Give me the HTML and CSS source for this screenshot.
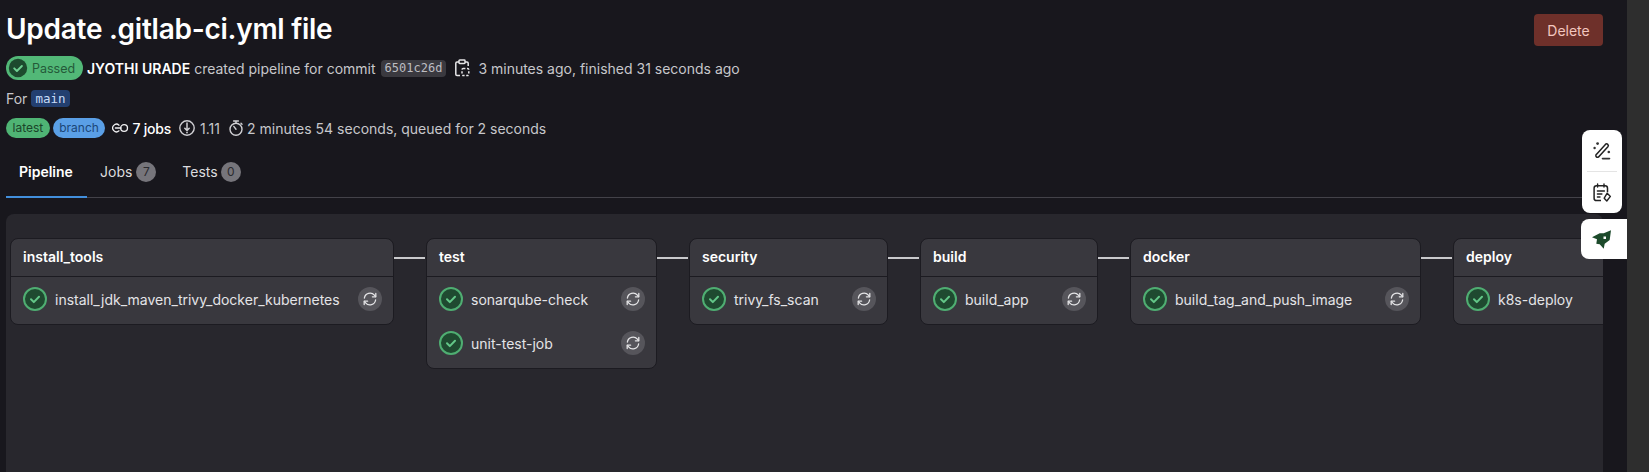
FILE: index.html
```html
<!DOCTYPE html>
<html lang="en">
<head>
    <meta charset="UTF-8">
    <meta name="viewport" content="width=device-width, initial-scale=1.0">
    <title>Update .gitlab-ci.yml file</title>
    <link rel="stylesheet" href="styles.css">
</head>
<body>
    <svg class="defs">
        <symbol id="icon-ok" viewBox="0 0 24 24">
            <circle cx="12" cy="12" r="11" fill="#1f4a30" stroke="#4fae72" stroke-width="2"/>
            <path d="M8 12.3l2.8 2.8L16 9.8" fill="none" stroke="#63c788" stroke-width="2" stroke-linecap="round" stroke-linejoin="round"/>
        </symbol>
        <symbol id="icon-retry" viewBox="0 0 16 16">
            <path d="M2.4 7A5.7 5.7 0 0 1 12.4 4.2L13.6 5.6M13.6 9A5.7 5.7 0 0 1 3.6 11.8L2.4 10.4" fill="none" stroke="#e4e4e6" stroke-width="1.3" stroke-linecap="round"/>
            <path d="M13.8 2.4v3.4h-3.4M2.2 13.6v-3.4h3.4" fill="none" stroke="#e4e4e6" stroke-width="1.3" stroke-linecap="round" stroke-linejoin="round"/>
        </symbol>
    </svg>

    <div class="page">
        <main class="content">
            <header class="head">
                <div class="head-text">
                    <h1>Update .gitlab-ci.yml file</h1>
                    <div class="meta meta-first">
                        <span class="status">
                            <svg class="status-icon" viewBox="0 0 20 20">
                                <circle cx="10" cy="10" r="9.2" fill="#1d4a2e"/>
                                <path d="M6.2 10.3l2.7 2.7 5-5" fill="none" stroke="#6fd092" stroke-width="1.9" stroke-linecap="round" stroke-linejoin="round"/>
                            </svg>
                            Passed
                        </span>
                        <span class="author">JYOTHI URADE</span>
                        <span>created pipeline for commit</span>
                        <code class="sha">6501c26d</code>
                        <svg class="icon-copy" viewBox="0 0 16 18">
                            <path d="M5 3H3A1.2 1.2 0 0 0 1.8 4.2v11A1.2 1.2 0 0 0 3 16.4h3M11 3h2a1.2 1.2 0 0 1 1.2 1.2V7" fill="none" stroke="#e6e6e8" stroke-width="1.5"/>
                            <rect x="5" y="1" width="6" height="3.4" rx=".7" fill="none" stroke="#e6e6e8" stroke-width="1.5"/>
                            <rect x="8" y="9.6" width="6.8" height="6.8" rx="1.2" fill="none" stroke="#e6e6e8" stroke-width="1.5" stroke-dasharray="2.2 1.6"/>
                        </svg>
                        <span class="time">3 minutes ago, finished 31 seconds ago</span>
                    </div>
                    <div class="meta meta-ref">
                        <span>For</span>
                        <code class="ref">main</code>
                    </div>
                    <div class="meta meta-stats">
                        <span class="pill pill-green">latest</span>
                        <span class="pill pill-blue">branch</span>
                        <span class="stat stat-jobs">
                            <svg class="icon-jobs" viewBox="0 0 18 12">
                                <path d="M7.4 3A4 4 0 1 0 7.4 9" fill="none" stroke="#f0f0f2" stroke-width="1.4" stroke-linecap="round"/>
                                <path d="M3.6 6h6" stroke="#f0f0f2" stroke-width="1.4" stroke-linecap="round"/>
                                <circle cx="12.8" cy="6" r="3.6" fill="none" stroke="#f0f0f2" stroke-width="1.4"/>
                            </svg>
                            7 jobs
                        </span>
                        <span class="stat stat-rate">
                            <svg class="icon-stat" viewBox="0 0 16 16">
                                <circle cx="8" cy="8" r="7.2" fill="none" stroke="#cfcfd3" stroke-width="1.4"/>
                                <path d="M8 3v7M5.8 8.2L8 10.6l2.2-2.4" fill="none" stroke="#cfcfd3" stroke-width="1.5" stroke-linecap="round" stroke-linejoin="round"/>
                                <circle cx="8" cy="12.6" r=".9" fill="#cfcfd3"/>
                            </svg>
                            1.11
                        </span>
                        <span class="stat stat-time">
                            <svg class="icon-stat" viewBox="0 0 16 16">
                                <circle cx="8" cy="9.2" r="6" fill="none" stroke="#cfcfd3" stroke-width="1.4"/>
                                <path d="M5.6 1h4.8M8 1v2M8 9.2L5.8 6.4M13 3.2l1 1" fill="none" stroke="#cfcfd3" stroke-width="1.4" stroke-linecap="round"/>
                            </svg>
                            2 minutes 54 seconds, queued for 2 seconds
                        </span>
                    </div>
                </div>
                <button class="delete">Delete</button>
            </header>

            <nav class="tabs">
                <a class="tab tab-active">Pipeline</a>
                <a class="tab">Jobs <span class="count">7</span></a>
                <a class="tab">Tests <span class="count">0</span></a>
            </nav>

            <section class="graph">
                <div class="stages">
                    <div class="stage">
                        <div class="stage-title">install_tools</div>
                        <div class="job">
                            <svg class="job-status"><use href="#icon-ok"/></svg>
                            <span class="job-name">install_jdk_maven_trivy_docker_kubernetes</span>
                            <span class="retry"><svg class="retry-icon"><use href="#icon-retry"/></svg></span>
                        </div>
                    </div>
                    <div class="link"></div>
                    <div class="stage">
                        <div class="stage-title">test</div>
                        <div class="job">
                            <svg class="job-status"><use href="#icon-ok"/></svg>
                            <span class="job-name">sonarqube-check</span>
                            <span class="retry"><svg class="retry-icon"><use href="#icon-retry"/></svg></span>
                        </div>
                        <div class="job">
                            <svg class="job-status"><use href="#icon-ok"/></svg>
                            <span class="job-name">unit-test-job</span>
                            <span class="retry"><svg class="retry-icon"><use href="#icon-retry"/></svg></span>
                        </div>
                    </div>
                    <div class="link"></div>
                    <div class="stage">
                        <div class="stage-title">security</div>
                        <div class="job">
                            <svg class="job-status"><use href="#icon-ok"/></svg>
                            <span class="job-name">trivy_fs_scan</span>
                            <span class="retry"><svg class="retry-icon"><use href="#icon-retry"/></svg></span>
                        </div>
                    </div>
                    <div class="link"></div>
                    <div class="stage">
                        <div class="stage-title">build</div>
                        <div class="job">
                            <svg class="job-status"><use href="#icon-ok"/></svg>
                            <span class="job-name">build_app</span>
                            <span class="retry"><svg class="retry-icon"><use href="#icon-retry"/></svg></span>
                        </div>
                    </div>
                    <div class="link"></div>
                    <div class="stage">
                        <div class="stage-title">docker</div>
                        <div class="job">
                            <svg class="job-status"><use href="#icon-ok"/></svg>
                            <span class="job-name">build_tag_and_push_image</span>
                            <span class="retry"><svg class="retry-icon"><use href="#icon-retry"/></svg></span>
                        </div>
                    </div>
                    <div class="link"></div>
                    <div class="stage">
                        <div class="stage-title">deploy</div>
                        <div class="job">
                            <svg class="job-status"><use href="#icon-ok"/></svg>
                            <span class="job-name">k8s-deploy</span>
                            <span class="retry"><svg class="retry-icon"><use href="#icon-retry"/></svg></span>
                        </div>
                    </div>
                </div>
            </section>
        </main>
        <div class="scrollbar"></div>
    </div>

    <div class="float-tools">
        <svg class="tool-icon" viewBox="0 0 20 20">
            <path d="M4.6 13.2L13.4 3.4a1.7 1.7 0 0 1 2.5 2.3L7 15.5a1.7 1.7 0 1 1-2.4-2.3Z" fill="none" stroke="#222" stroke-width="1.5"/>
            <circle cx="5.6" cy="2.6" r="1.4" fill="#333"/>
            <circle cx="2.6" cy="7" r="1.2" fill="#333"/>
            <circle cx="16.8" cy="11" r="1.3" fill="#333"/>
            <path d="M10.5 17.6h7" stroke="#333" stroke-width="1.6" stroke-linecap="round"/>
        </svg>
        <div class="tool-sep"></div>
        <svg class="tool-icon" viewBox="0 0 20 20">
            <path d="M9 17.6H4.5a2.4 2.4 0 0 1-2.4-2.4V5.2a2.4 2.4 0 0 1 2.4-2.4h8.6a2.4 2.4 0 0 1 2.4 2.4v4" fill="none" stroke="#222" stroke-width="1.5"/>
            <path d="M5.6 1v3M12 1v3M5.4 8h7M5.4 11h4.5M5.4 14h2.6" fill="none" stroke="#222" stroke-width="1.4" stroke-linecap="round"/>
            <path d="M15.2 10.2l3.2 3.2-3.6 4.6-2.6-2.8Z" fill="none" stroke="#222" stroke-width="1.4" stroke-linejoin="round"/>
        </svg>
    </div>
    <div class="float-rocket">
        <svg class="rocket-icon" viewBox="0 0 19 19">
            <path d="M19 .3L17.7 10 12.7 13.7 11.7 18.7 7.7 14.3 4.3 13.7 5 9.3 0 7.3 7.7 3.3 11.7 3.3Z" fill="#1c4a2b"/>
            <rect x="11.5" y="6.5" width="2.5" height="2.5" fill="#fff"/>
        </svg>
    </div>
</body>
</html>
```

FILE: styles.css
```css
* {
    box-sizing: border-box;
}

html, body {
    height: 100%;
}

body {
    margin: 0;
    overflow: hidden;
    background: #18171d;
    color: #c7c7cb;
    font-family: Inter, "Liberation Sans", sans-serif;
    font-size: 14px;
}

.defs {
    display: none;
}

.page {
    display: flex;
    height: 472px;
}

.content {
    width: 1627px;
    padding-left: 6px;
    padding-right: 24px;
    overflow: hidden;
}

.scrollbar {
    width: 22px;
    background: #2e2e2e;
}

/* header */
.head {
    display: flex;
    justify-content: space-between;
    align-items: flex-start;
    height: 150px;
}

h1 {
    margin: 12px 0 0;
    height: 34px;
    color: #fff;
    font-size: 28px;
    line-height: 34px;
    font-weight: 600;
    letter-spacing: -0.27px;
}

.meta {
    display: flex;
    align-items: center;
}

.meta-first {
    margin-top: 10px;
    height: 24px;
}

.meta-ref {
    margin-top: 7px;
    height: 22px;
}

.meta-stats {
    margin-top: 9px;
    height: 20px;
}

.status {
    display: inline-flex;
    align-items: center;
    width: 77px;
    height: 24px;
    padding-left: 2px;
    border-radius: 12px;
    background: #52b877;
    color: #245a39;
    font-size: 12.5px;
    gap: 4px;
}

.status-icon {
    width: 20px;
    height: 20px;
}

.author {
    margin-left: 4px;
    margin-right: 4px;
    color: #fff;
    font-weight: 600;
}

.sha {
    margin-left: 5px;
    padding: 0 4px;
    height: 17px;
    border-radius: 4px;
    background: #3a393f;
    color: #bdbdc2;
    font-family: "DejaVu Sans Mono", monospace;
    font-size: 12px;
    line-height: 17px;
}

.icon-copy {
    width: 16px;
    height: 18px;
    margin-left: 8px;
}

.time {
    margin-left: 8px;
}

.ref {
    margin-left: 4px;
    padding: 0 4px;
    height: 17px;
    border-radius: 4px;
    background: #233f70;
    color: #c8dcf7;
    font-family: "DejaVu Sans Mono", monospace;
    font-size: 12.5px;
    line-height: 17px;
}

.pill {
    height: 20px;
    padding: 0 6.5px;
    border-radius: 10px;
    font-size: 12px;
    line-height: 20px;
}

.pill-green {
    background: #4fb474;
    color: #1b4429;
}

.pill-blue {
    margin-left: 3px;
    background: #5a9fe6;
    color: #1b4677;
}

.stat {
    display: inline-flex;
    align-items: center;
    margin-left: 9px;
    gap: 4px;
}

.stat-jobs {
    margin-left: 7px;
    gap: 3px;
    color: #fff;
    font-weight: 500;
    letter-spacing: -0.2px;
}

.stat-rate {
    margin-left: 8px;
    gap: 5px;
}

.stat-time {
    margin-left: 8px;
    gap: 3px;
}

.icon-jobs {
    width: 17px;
    height: 12px;
}

.icon-stat {
    width: 16px;
    height: 16px;
}

.delete {
    margin-top: 14px;
    width: 69px;
    height: 32px;
    border: 0;
    border-radius: 4px;
    background: #6e302a;
    color: #f3c6bf;
    font-family: inherit;
    font-size: 14px;
}

/* tabs */
.tabs {
    display: flex;
    height: 48px;
    border-bottom: 1px solid #434249;
}

.tab {
    display: flex;
    align-items: center;
    height: 48px;
    padding: 0 12px 3px 13px;
    gap: 4px;
    color: #dcdcdf;
    border-bottom: 2px solid transparent;
}

.tab-active {
    width: 81px;
    color: #fff;
    font-weight: 600;
    border-bottom-color: #428fdc;
}

.tab:nth-child(3) {
    padding-left: 14px;
    gap: 3px;
}

.count {
    width: 20px;
    height: 20px;
    border-radius: 50%;
    background: #76757b;
    color: #2a2a2e;
    font-size: 12px;
    line-height: 20px;
    text-align: center;
}

/* pipeline graph */
.graph {
    margin-top: 16px;
    height: 260px;
    padding: 24px 0 0 4px;
    border-radius: 8px 8px 0 0;
    background: #28272d;
    overflow: hidden;
}

.stages {
    display: grid;
    grid-template-columns: 384px 32px 231px 32px 199px 32px 178px 32px 291px 32px 231px;
    align-items: start;
}

.stage {
    border: 1px solid #1c1b21;
    border-radius: 8px;
    background: #39383e;
    padding-bottom: 3px;
}

.stage-title {
    height: 38px;
    padding: 0 12px;
    border-bottom: 1px solid #1c1b21;
    color: #fff;
    font-weight: 600;
    line-height: 36px;
}

.job {
    display: flex;
    align-items: center;
    height: 44px;
    padding: 0 11px 0 12px;
}

.job-status {
    width: 24px;
    height: 24px;
    flex: none;
}

.job-name {
    flex: 1;
    margin-left: 8px;
    color: #e4e4e7;
    white-space: nowrap;
}

.retry {
    display: flex;
    align-items: center;
    justify-content: center;
    width: 24px;
    height: 24px;
    border-radius: 50%;
    background: #56555b;
    flex: none;
}

.retry-icon {
    width: 16px;
    height: 16px;
}

.link {
    height: 2px;
    margin: 19px 1px 0 0;
    background: #c9c9cc;
}

/* floating widgets on the right edge */
.float-tools {
    position: absolute;
    left: 1582px;
    top: 130px;
    width: 40px;
    height: 83px;
    padding-top: 11px;
    border-radius: 8px;
    background: #fff;
    text-align: center;
}

.tool-icon {
    display: block;
    width: 20px;
    height: 20px;
    margin: 0 auto;
}

.tool-sep {
    height: 1px;
    margin: 10px 5px 11px;
    background: #e4e4e4;
}

.float-rocket {
    position: absolute;
    left: 1581px;
    top: 219px;
    width: 46px;
    height: 40px;
    padding: 11px 0 0 11px;
    border-radius: 8px 0 0 8px;
    background: #fff;
}

.rocket-icon {
    display: block;
    width: 19px;
    height: 19px;
}
```
